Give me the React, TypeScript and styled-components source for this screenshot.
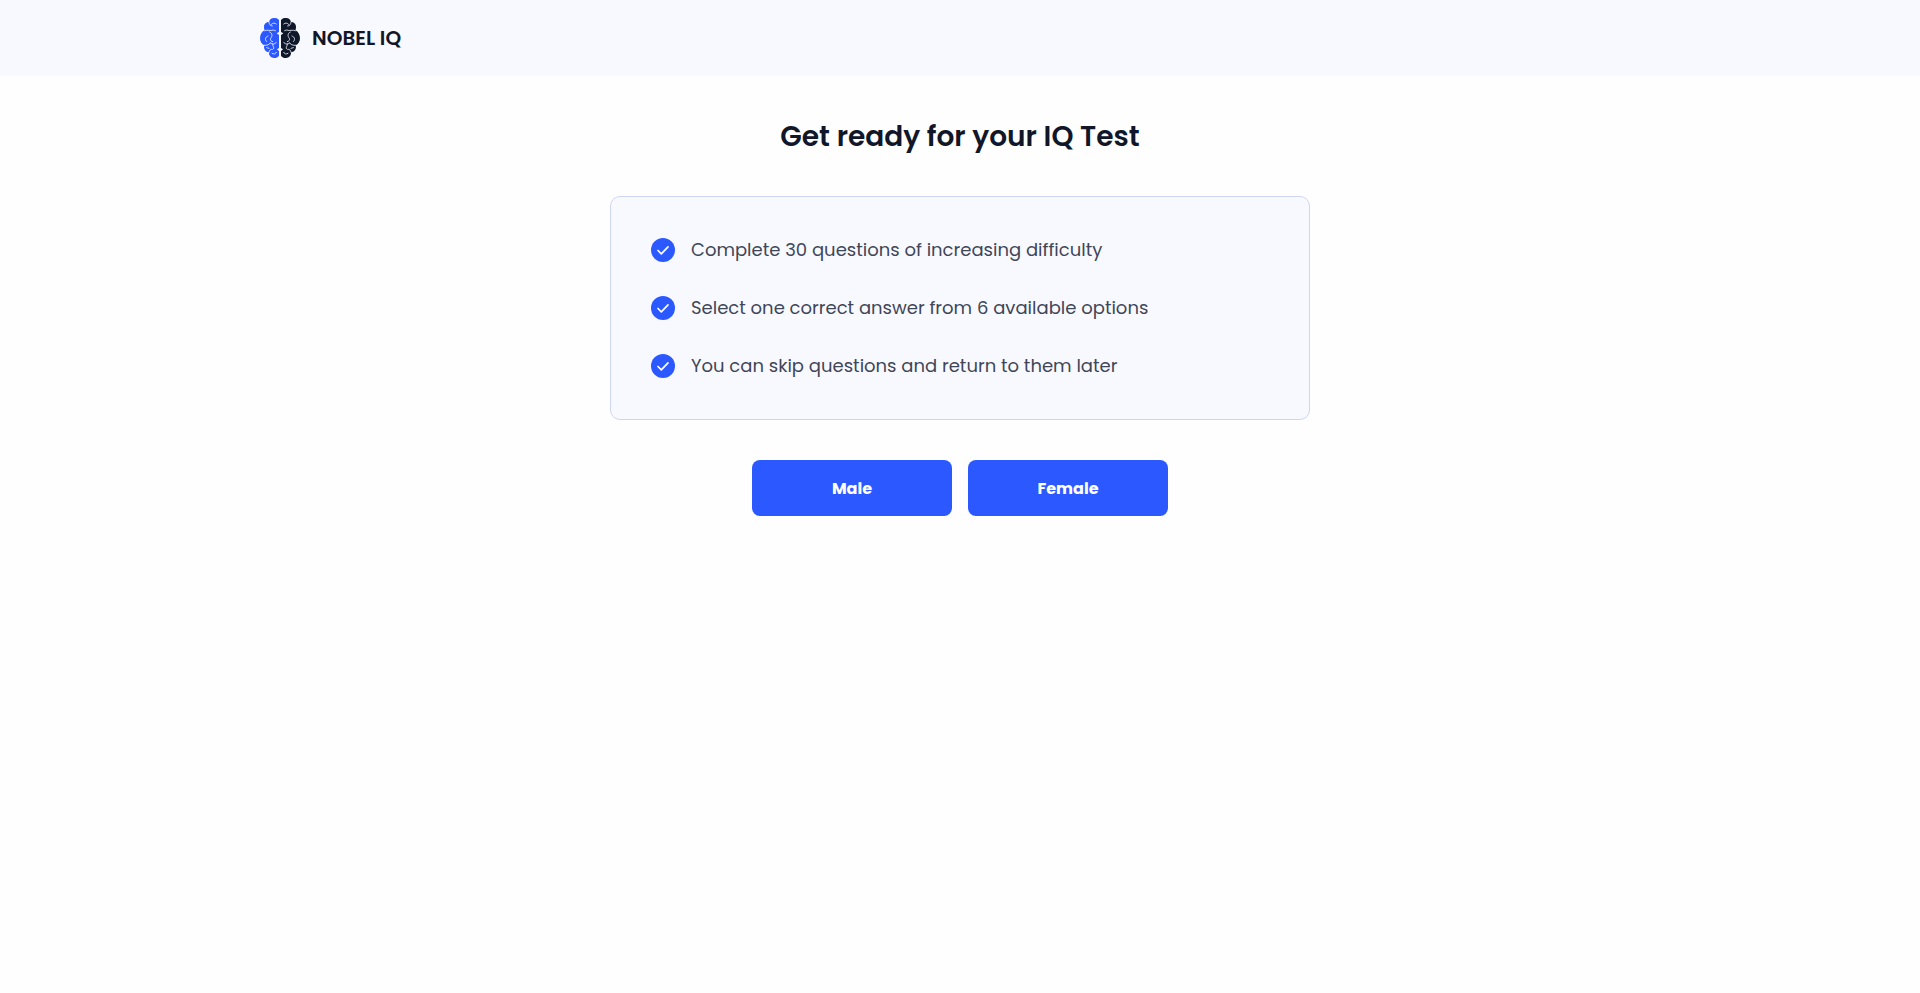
import React from "react";
import styled, { createGlobalStyle } from "styled-components";

const GlobalStyle = createGlobalStyle`
  *, *::before, *::after { box-sizing: border-box; }
  body {
    margin: 0;
    background: #fefefe;
    color: #111629;
    font-family: Poppins, Inter, "Liberation Sans", sans-serif;
  }
`;

const Header = styled.header`
  background: #f8f9ff;
  padding: 18px 24px;
`;

const HeaderInner = styled.div`
  max-width: 1400px;
  margin: 0 auto;
  display: flex;
`;

const Brand = styled.a`
  display: flex;
  align-items: center;
  gap: 12px;
  color: #111629;
  font-size: 20px;
  line-height: 40px;
  font-weight: 600;
  text-decoration: none;
`;

const LogoSvg = styled.svg`
  display: block;
  width: 40px;
  height: 40px;
`;

const Main = styled.main`
  max-width: 748px;
  margin: 0 auto;
  padding: 40px 24px;
`;

const Title = styled.h1`
  margin: 0 0 38px;
  font-size: 28px;
  line-height: 42px;
  font-weight: 600;
  text-align: center;
`;

const Card = styled.ul`
  list-style: none;
  margin: 0 0 40px;
  padding: 40px;
  display: flex;
  flex-direction: column;
  gap: 32px;
  background: #f8f9ff;
  border: 1px solid #cfd5f5;
  border-radius: 10px;
`;

const Rule = styled.li`
  display: flex;
  align-items: center;
  gap: 16px;
  color: #3f4657;
  font-size: 18px;
  line-height: 26px;
`;

const CheckSvg = styled.svg`
  flex: none;
  width: 24px;
  height: 24px;
`;

const Actions = styled.div`
  display: flex;
  flex-wrap: wrap;
  justify-content: center;
  gap: 16px;
`;

const ChoiceButton = styled.button`
  width: 200px;
  padding: 17px 16px 15px;
  border: 0;
  border-radius: 8px;
  background: #2b59ff;
  color: #fff;
  font-family: inherit;
  font-size: 16px;
  line-height: 24px;
  font-weight: 700;
  cursor: pointer;
`;

function BrainHalf({ color }: { color: string }) {
  return (
    <>
      <path
        fill={color}
        d="M57 6C53 1 47 0 42 0C34 0 28 5 27 12C19 12 12 18 12 26C12 31 13 34 14 37C5 41 0 51 0 61C0 71 5 79 13 82C10 91 15 102 27 103C26 113 33 120 42 120C49 120 54 118 57 113V99L51 94L57 90V51L50 46L57 42Z"
      />
      <g fill="none" stroke="#f8f9ff" strokeWidth="2.4" strokeLinecap="round" strokeLinejoin="round">
        <path d="M27 12C27 19 31 24 37 24M34 19C38 14 45 14 49 18" />
        <path d="M14 38C22 34 31 40 40 36L46 38" />
        <path d="M24 54C15 57 14 66 20 71M29 42C37 45 38 54 32 61C30 66 33 70 38 71" />
        <path d="M13 82C22 83 29 79 31 75M31 75C37 80 45 79 49 73M38 78C38 86 43 87 41 92" />
        <path d="M27 103C27 97 32 92 37 94M36 106C41 110 47 108 49 103M20 89L27 91" />
      </g>
    </>
  );
}

function Logo() {
  return (
    <LogoSvg viewBox="0 0 120 120" aria-hidden="true">
      <BrainHalf color="#2b59ff" />
      <g transform="translate(120 0) scale(-1 1)">
        <BrainHalf color="#0f172a" />
      </g>
    </LogoSvg>
  );
}

function CheckIcon() {
  return (
    <CheckSvg viewBox="0 0 24 24" aria-hidden="true">
      <circle cx="12" cy="12" r="12" fill="#2b59ff" />
      <path
        d="M7 12.5L10.3 15.8L17 8.8"
        fill="none"
        stroke="#fff"
        strokeWidth="1.7"
        strokeLinecap="round"
        strokeLinejoin="round"
      />
    </CheckSvg>
  );
}

const rules = [
  "Complete 30 questions of increasing difficulty",
  "Select one correct answer from 6 available options",
  "You can skip questions and return to them later",
];

export default function App() {
  return (
    <>
      <GlobalStyle />
      <Header>
        <HeaderInner>
          <Brand href="#">
            <Logo />
            NOBEL IQ
          </Brand>
        </HeaderInner>
      </Header>
      <Main>
        <Title>Get ready for your IQ Test</Title>
        <Card>
          {rules.map((rule) => (
            <Rule key={rule}>
              <CheckIcon />
              {rule}
            </Rule>
          ))}
        </Card>
        <Actions>
          <ChoiceButton type="button">Male</ChoiceButton>
          <ChoiceButton type="button">Female</ChoiceButton>
        </Actions>
      </Main>
    </>
  );
}
